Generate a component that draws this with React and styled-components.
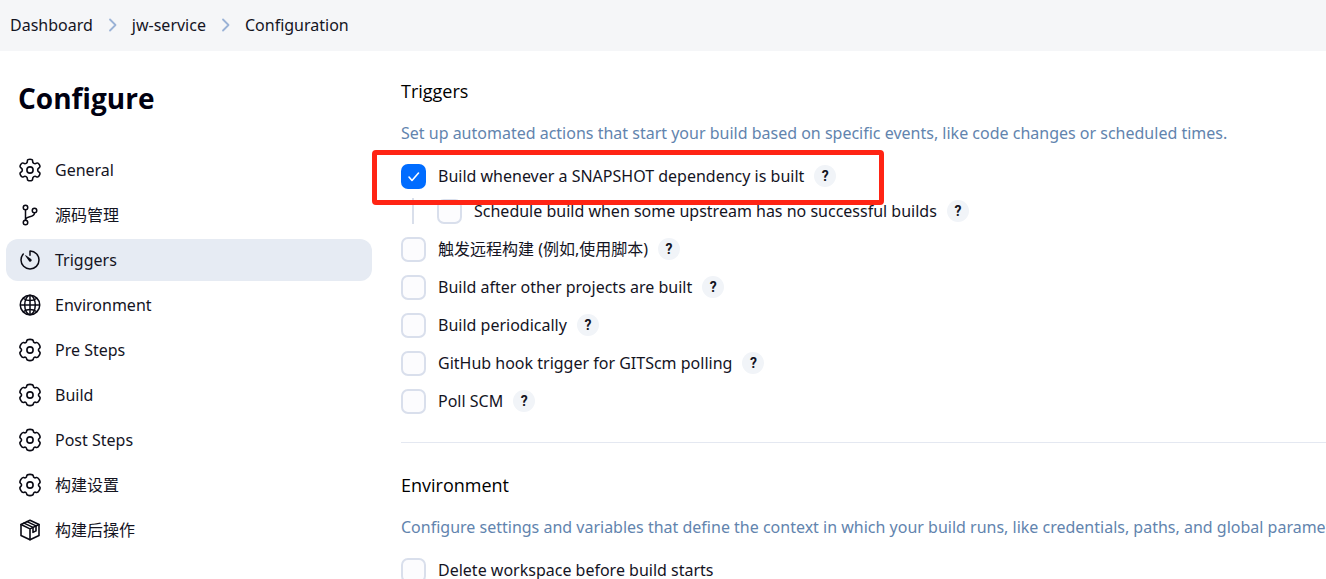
import React, { useId } from "react";
import styled, { createGlobalStyle } from "styled-components";
import {
  IoGitBranchOutline,
  IoTimerOutline,
  IoGlobeOutline,
} from "react-icons/io5";

const GlobalStyle = createGlobalStyle`
  *, *::before, *::after {
    box-sizing: border-box;
  }

  body {
    margin: 0;
    background: #fff;
    color: #14141f;
    font-family: "Noto Sans", "Noto Sans CJK SC", sans-serif;
    font-size: 16px;
    line-height: 24px;
    overflow-x: hidden;
  }
`;

const Breadcrumbs = styled.nav`
  display: flex;
  align-items: center;
  gap: 12px;
  height: 51px;
  padding: 0 10px 2px;
  background: #f5f6f8;
`;

const Crumb = styled.a`
  color: inherit;
  text-decoration: none;
`;

const Separator = styled.svg`
  width: 15px;
  height: 15px;
  fill: none;
  stroke: #9ab2d6;
  stroke-width: 1.8;
  stroke-linecap: round;
  stroke-linejoin: round;
`;

const Layout = styled.div`
  display: grid;
  grid-template-columns: 366px minmax(0, 1fr);
  column-gap: 29px;
  padding-left: 6px;
`;

const Sidebar = styled.aside`
  padding-top: 28px;
`;

const PageTitle = styled.h1`
  margin: 0 0 32px;
  padding-left: 12px;
  font-family: "Open Sans", sans-serif;
  font-size: 28px;
  line-height: 38px;
  font-weight: 700;
  color: #000010;
`;

const TaskList = styled.ul`
  display: flex;
  flex-direction: column;
  gap: 3px;
  margin: 0;
  padding: 0;
  list-style: none;
`;

const Task = styled.a`
  display: flex;
  align-items: center;
  gap: 13px;
  height: 42px;
  padding: 0 12px;
  border-radius: 12px;
  color: inherit;
  text-decoration: none;
  background: ${({ $active }) => ($active ? "#e6ebf3" : "transparent")};

  svg {
    width: 24px;
    height: 24px;
    color: #0a0a14;
  }
`;

const LineIcon = styled.svg`
  fill: none;
  stroke: currentColor;
  stroke-width: 1.6;
  stroke-linecap: round;
  stroke-linejoin: round;
`;

const Main = styled.main`
  min-width: 0;
`;

const Section = styled.section`
  padding: 28px 0;

  & + & {
    padding-top: 30px;
    border-top: 1px solid #e4e8f1;
  }
`;

const SectionTitle = styled.h2`
  margin: 0 0 18px;
  font-family: "Open Sans", sans-serif;
  font-size: 18px;
  line-height: 24px;
  font-weight: 400;
  color: #000;
`;

const Description = styled.p`
  margin: 0 0 18px;
  white-space: nowrap;
  color: #6284ae;
`;

const OptionList = styled.div`
  display: flex;
  flex-direction: column;
  gap: 12px;
`;

const OptionGroup = styled.div`
  display: flex;
  flex-direction: column;
  gap: 9px;
`;

const Option = styled.div`
  display: flex;
  align-items: center;
  height: 26px;
`;

const Highlight = styled.div`
  position: relative;

  &::before {
    content: "";
    position: absolute;
    z-index: 1;
    top: -13px;
    left: -29px;
    width: 512px;
    height: 55px;
    border: 5px solid #ff2414;
    border-radius: 4px;
    pointer-events: none;
  }
`;

const Nested = styled.div`
  margin-left: 11px;
  padding-left: 23px;
  border-left: 2px solid #d9dfeb;
`;

const CHECK_MARK = `url("data:image/svg+xml,%3Csvg xmlns='http://www.w3.org/2000/svg' viewBox='0 0 25 25' fill='none' stroke='white' stroke-width='1.6' stroke-linecap='round' stroke-linejoin='round'%3E%3Cpath d='M8 13l3 3.5 6.5-7.5'/%3E%3C/svg%3E")`;

const Checkbox = styled.input`
  appearance: none;
  flex: none;
  width: 25px;
  height: 25px;
  margin: 0;
  border: 2px solid #d9dfec;
  border-radius: 7px;
  background: #fcfcfe;

  &:checked {
    border: 0;
    background: #006cff ${CHECK_MARK} center / 25px 25px no-repeat;
  }
`;

const Label = styled.label`
  padding-left: 12px;
  white-space: nowrap;
`;

const HelpButton = styled.button`
  width: 22px;
  height: 22px;
  margin-left: 10px;
  padding: 0;
  border: 0;
  border-radius: 50%;
  background: #f1f4f8;
  color: #14141f;
  font-family: Roboto, sans-serif;
  font-size: 14px;
  line-height: 22px;
  font-weight: 700;
`;

const polar = (deg, r) => {
  const rad = (deg * Math.PI) / 180;
  return [12 + r * Math.sin(rad), 12 - r * Math.cos(rad)];
};

// Six lobes: two control points on each lobe, two in each notch
const cogPath = (lobe, notch, radius) => {
  const points = [];
  for (let a = 0; a < 360; a += 60) {
    points.push(
      polar(a - lobe, 11.1),
      polar(a + lobe, 11.1),
      polar(a + notch, radius),
      polar(a + 60 - notch, radius)
    );
  }
  const mid = (p, q) => `${((p[0] + q[0]) / 2).toFixed(2)} ${((p[1] + q[1]) / 2).toFixed(2)}`;
  const curves = points.map((p, i) => {
    const next = points[(i + 1) % points.length];
    return `Q${p[0].toFixed(2)} ${p[1].toFixed(2)} ${mid(p, next)}`;
  });
  return `M${mid(points[points.length - 1], points[0])}${curves.join("")}Z`;
};

const GEAR = cogPath(14, 19, 7.8);
const SOFT_GEAR = cogPath(16, 24, 8.5);

const GearIcon = ({ path = SOFT_GEAR }) => (
  <LineIcon viewBox="0 0 24 24" aria-hidden="true">
    <path d={path} />
    <circle cx="12" cy="12" r="3.1" />
  </LineIcon>
);

const SettingsIcon = () => <GearIcon path={GEAR} />;

const PackageIcon = () => (
  <LineIcon viewBox="0 0 24 24" aria-hidden="true">
    <path d="M12 2.2l9 4.3v11L12 21.8l-9-4.3v-11z" />
    <path d="M3 6.5l9 4.4 9-4.4M12 10.9v10.9" />
    <path d="M6 5.1l9 4.3v5l3-1.5V7.9L9 3.6" />
  </LineIcon>
);

const TASKS = [
  { label: "General", icon: SettingsIcon },
  { label: "源码管理", icon: IoGitBranchOutline },
  { label: "Triggers", icon: IoTimerOutline, active: true },
  { label: "Environment", icon: IoGlobeOutline },
  { label: "Pre Steps", icon: GearIcon },
  { label: "Build", icon: GearIcon },
  { label: "Post Steps", icon: GearIcon },
  { label: "构建设置", icon: GearIcon },
  { label: "构建后操作", icon: PackageIcon },
];

const Chevron = () => (
  <Separator viewBox="0 0 15 15" aria-hidden="true">
    <path d="M5 2.5l5.5 5.5L5 13.5" />
  </Separator>
);

const OptionRow = ({ label, checked, help = true }) => {
  const id = useId();
  return (
    <Option>
      <Checkbox type="checkbox" id={id} defaultChecked={checked} />
      <Label htmlFor={id}>{label}</Label>
      {help && <HelpButton type="button" aria-label={`Help for ${label}`}>?</HelpButton>}
    </Option>
  );
};

export default function App() {
  return (
    <>
      <GlobalStyle />
      <Breadcrumbs>
        <Crumb href="#">Dashboard</Crumb>
        <Chevron />
        <Crumb href="#">jw-service</Crumb>
        <Chevron />
        <Crumb href="#">Configuration</Crumb>
      </Breadcrumbs>
      <Layout>
        <Sidebar>
          <PageTitle>Configure</PageTitle>
          <TaskList>
            {TASKS.map(({ label, icon: Icon, active }) => (
              <li key={label}>
                <Task href="#" $active={active}>
                  <Icon />
                  {label}
                </Task>
              </li>
            ))}
          </TaskList>
        </Sidebar>
        <Main>
          <Section>
            <SectionTitle>Triggers</SectionTitle>
            <Description>
              Set up automated actions that start your build based on specific events, like code changes or scheduled times.
            </Description>
            <OptionList>
              <OptionGroup>
                <Highlight>
                  <OptionRow label="Build whenever a SNAPSHOT dependency is built" checked />
                </Highlight>
                <Nested>
                  <OptionRow label="Schedule build when some upstream has no successful builds" />
                </Nested>
              </OptionGroup>
              <OptionRow label="触发远程构建 (例如,使用脚本)" />
              <OptionRow label="Build after other projects are built" />
              <OptionRow label="Build periodically" />
              <OptionRow label="GitHub hook trigger for GITScm polling" />
              <OptionRow label="Poll SCM" />
            </OptionList>
          </Section>
          <Section>
            <SectionTitle>Environment</SectionTitle>
            <Description>
              Configure settings and variables that define the context in which your build runs, like credentials, paths, and global parameters.
            </Description>
            <OptionList>
              <OptionRow label="Delete workspace before build starts" help={false} />
            </OptionList>
          </Section>
        </Main>
      </Layout>
    </>
  );
}
